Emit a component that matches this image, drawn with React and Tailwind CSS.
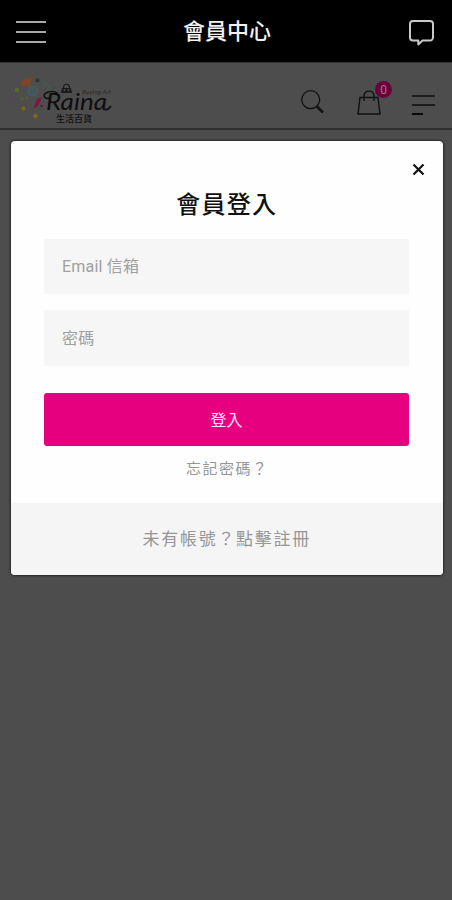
import { useState } from 'react';

const CONFETTI = [
  { d: 'M10 10l4-4 10-2-4 5 2 5-5-2-4 2z', fill: '#7c4526' },
  { d: 'M20 37l4-4 3-7 5-2-2 6-4 5-3-1z', fill: '#761c40' },
];

const DOTS = [
  { cx: 7, cy: 17, r: 2.3, fill: '#5c6a22' },
  { cx: 27.5, cy: 7.5, r: 1.9, fill: '#233c37' },
  { cx: 3.5, cy: 27.5, r: 1.3, fill: '#5a3f5d' },
  { cx: 13.5, cy: 35.5, r: 2, fill: '#7a671e' },
  { cx: 25.5, cy: 43, r: 2.2, fill: '#80661d' },
  { cx: 12, cy: 26, r: 2.4, fill: '#4c5c38' },
  { cx: 31.5, cy: 33, r: 1.3, fill: '#511e38' },
  { cx: 17, cy: 25, r: 1, fill: '#735a29' },
  { cx: 44, cy: 15, r: 0.9, fill: '#36424b' },
];

function Logo() {
  return (
    <svg width="104" height="52" viewBox="0 0 104 52" fill="none" aria-label="Raina">
      {CONFETTI.map((c) => <path key={c.d} d={c.d} fill={c.fill} />)}
      {DOTS.map((d) => <circle key={`${d.cx}-${d.cy}`} {...d} />)}
      <circle cx="22.500" cy="18" r="5" fill="#435659" stroke="#4f6468" strokeDasharray="2 1" />
      <path d="M32 9c5 0 8 3 9 8M32 13l6-3M35 18l4-4M13 20l3 4" stroke="#46584a" strokeWidth="1.4" />
      {/* handbag above the name */}
      <path d="M52 15h9l1 5H51z" fill="#1b1b1b" />
      <path d="M53.500 15c0-5 6-5 6 0" stroke="#1b1b1b" strokeWidth="1.2" />
      <circle cx="54.500" cy="17" r="1" fill="#4a4a4a" />
      <circle cx="58.500" cy="17" r="1" fill="#4a4a4a" />
      {/* swash in front of the R */}
      <path d="M40 25c-5 2-8-3-4-5 3-2 8-2 11 0" stroke="#111" strokeWidth="1.6" strokeLinecap="round" />
      <text x="36" y="37" fill="#0e0e0e" fontFamily="Lato, sans-serif" fontStyle="italic" fontSize="23" textLength="61" lengthAdjust="spacingAndGlyphs">Raina</text>
      <path d="M94 36.500c3 0.500 5-0.500 6.500-3" stroke="#111" strokeWidth="1.6" strokeLinecap="round" />
      <text x="72" y="21" fill="#292929" fontFamily="Lato, sans-serif" fontStyle="italic" fontSize="6.500" textLength="29">Buying Art</text>
      <text x="46" y="48.500" fill="#101010" fontFamily="'Noto Sans CJK TC', sans-serif" fontWeight="500" fontSize="9" textLength="36" lengthAdjust="spacingAndGlyphs">生活百貨</text>
    </svg>
  );
}

function AppBar() {
  return (
    <header className="flex h-[62px] items-center justify-between bg-black pt-0.5 pr-[17px] pl-4">
      <button type="button" aria-label="選單" className="flex w-[30px] flex-col gap-2">
        <span className="h-0.5 bg-[#a8a8a8]" />
        <span className="h-0.5 bg-[#a8a8a8]" />
        <span className="h-0.5 bg-[#a8a8a8]" />
      </button>
      <h1 className="text-[22px] leading-none font-medium text-[#f2f2f2]">會員中心</h1>
      <button type="button" aria-label="訊息">
        <svg width="27" height="27" viewBox="0 0 27 27" fill="none" stroke="#c9c9c9" strokeWidth="2" strokeLinejoin="round">
          <path d="M5 2h17a3 3 0 0 1 3 3v13.500a3 3 0 0 1-3 3H14.500l-4.200 4v-4H5a3 3 0 0 1-3-3V5a3 3 0 0 1 3-3z" />
        </svg>
      </button>
    </header>
  );
}

function StoreHeader() {
  return (
    <div className="flex h-[68px] items-start justify-between border-t border-b-2 border-t-[#343434] border-b-[#303030] pr-[17px] pl-2.5">
      <div className="pt-2.5">
        <Logo />
      </div>
      <div className="flex items-start pt-[27px]">
        <svg className="mr-8" width="24" height="24" viewBox="0 0 24 24" fill="none" stroke="#111">
          <circle cx="9.700" cy="9.700" r="9" strokeWidth="1.300" />
          <path d="M16 16.500l6 6" strokeWidth="2.600" />
        </svg>
        <div className="relative mr-[31px]">
          <svg width="24" height="26" viewBox="0 0 24 26" fill="none" stroke="#111" strokeWidth="1.400">
            <path d="M3 7.500h18l2 16.500H1z" />
            <path d="M7 11V6c0-6.500 10-6.500 10 0v5" />
          </svg>
          <span className="absolute -top-[9px] left-[18px] flex size-[17px] items-center justify-center rounded-full bg-[#6c003b] text-xs text-[#a5778e]">0</span>
        </div>
        <div className="flex w-[23px] flex-col gap-[7px] pt-[5px]">
          <span className="h-0.5 bg-[#1c1c1c]" />
          <span className="h-0.5 bg-[#1c1c1c]" />
          <span className="h-0.5 w-[11px] bg-[#080808]" />
        </div>
      </div>
    </div>
  );
}

function LoginDialog() {
  const [email, setEmail] = useState('');
  const [password, setPassword] = useState('');

  return (
    <div role="dialog" className="mt-[11px] mr-[9.500px] ml-[11px] flex h-[434px] flex-col overflow-hidden rounded-[4px] bg-[#fefefe] shadow-[0_0_2px_1px_rgba(0,0,0,0.5)]">
      <div className="flex h-[42px] items-start justify-end pt-[22px] pr-[18px]">
        <button type="button" aria-label="關閉">
          <svg width="13" height="13" viewBox="0 0 13 13" stroke="#111" strokeWidth="2.200">
            <path d="M1.500 1.500l10 10M11.500 1.500l-10 10" />
          </svg>
        </button>
      </div>
      <h2 className="mt-2 text-center text-2xl leading-7 font-medium tracking-[1.300px] text-[#111]">會員登入</h2>
      <form className="flex flex-col pt-5 pr-[33.500px] pl-[33px]" onSubmit={(e) => e.preventDefault()}>
        <input
          type="email"
          value={email}
          onChange={(e) => setEmail(e.target.value)}
          placeholder="Email 信箱"
          className="h-[55px] bg-[#f6f6f6] px-[18px] text-base tracking-[0.200px] placeholder:text-[#a0a0a0]"
        />
        <input
          type="password"
          value={password}
          onChange={(e) => setPassword(e.target.value)}
          placeholder="密碼"
          className="mt-4 h-14 bg-[#f6f6f6] px-[18px] text-base tracking-[0.200px] placeholder:text-[#a0a0a0]"
        />
        <button type="submit" className="mt-[27px] h-[53px] rounded-[3px] bg-[#e6007f] pt-0.5 text-base text-[#ffe6f3]">登入</button>
      </form>
      <a href="#forgot" className="mt-[11px] pl-px text-center text-[15px] leading-6 tracking-[1.500px] text-[#979797]">忘記密碼？</a>
      <div className="mt-auto flex h-[72px] items-center justify-center bg-[#f5f5f5]">
        <a href="#register" className="pt-px text-[17px] tracking-[1.700px] text-[#969696]">未有帳號？點擊註冊</a>
      </div>
    </div>
  );
}

export default function App() {
  return (
    <div className="h-screen overflow-hidden bg-[#4d4d4d] font-[Roboto,'Noto_Sans_CJK_TC',sans-serif]">
      <AppBar />
      <StoreHeader />
      <LoginDialog />
    </div>
  );
}
